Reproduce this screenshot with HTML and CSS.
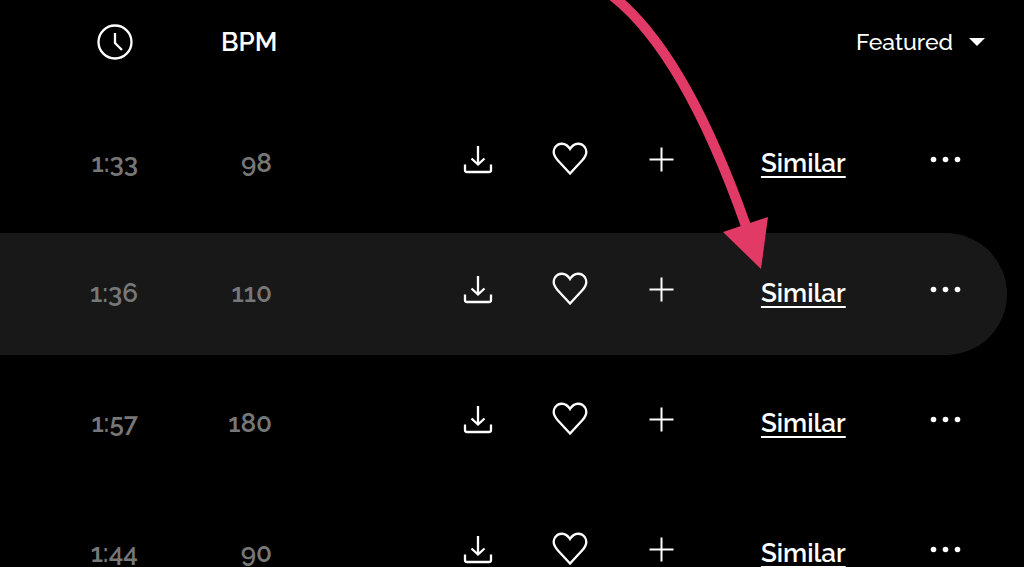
FILE: index.html
```html
<!DOCTYPE html>
<html lang="en">
<head>
<meta charset="utf-8">
<meta name="viewport" content="width=device-width, initial-scale=1">
<title>Tracks</title>
<link rel="stylesheet" href="styles.css">
</head>
<body>
<svg class="symbols" aria-hidden="true">
  <symbol id="download" viewBox="0 0 36 36"><path d="M18 4v18M11.500 16.500L18 22.500l6.500-6M5 22.500V28q0 2 2 2h22q2 0 2-2v-5.500" stroke-width="2.300"/></symbol>
  <symbol id="heart" viewBox="0 0 36 36"><path d="M18 31.500L5.500 18C1.500 13.500 0.500 9.500 3 5.500C6.500 0.500 13.500 0 18 7C22.500 0 29.500 0.500 33 5.500C35.500 9.500 34.500 13.500 30.500 18Z" stroke-width="2.300"/></symbol>
  <symbol id="plus" viewBox="0 0 36 36"><path d="M17.500 5.500v24M5.500 17.500h24" stroke-width="2"/></symbol>
  <symbol id="dots" viewBox="0 0 36 36"><g fill="currentColor" stroke="none"><circle cx="6.500" cy="17.500" r="2.800"/><circle cx="18.500" cy="17.500" r="2.800"/><circle cx="30.500" cy="17.500" r="2.800"/></g></symbol>
</svg>
<main class="page">
  <table class="tracks">
    <colgroup><col class="col-time"><col class="col-bpm"><col><col class="col-icon"><col class="col-icon"><col class="col-similar"><col class="col-more"></colgroup>
    <thead>
      <tr>
        <th class="time" scope="col" aria-label="Duration"><svg class="clock" viewBox="0 0 36 36"><circle cx="18" cy="18" r="16.500"/><path d="M18 9v10l7 7"/></svg></th>
        <th class="bpm bpm-title" scope="col">BPM</th>
        <td class="sorting" colspan="5">
          <span class="sort">
            <select class="sort-select" aria-label="Sort by"><option>Featured</option></select>
            <svg class="caret" viewBox="0 0 16 8" aria-hidden="true"><path d="M0 0h16l-8 8z"/></svg>
          </span>
        </td>
      </tr>
    </thead>
    <tbody>
      <tr>
        <td class="time">1:33</td><td class="bpm">98</td>
        <td class="action first"><button class="icon-button" aria-label="Download"><svg class="icon"><use href="#download"/></svg></button></td>
        <td class="action"><button class="icon-button" aria-label="Like"><svg class="icon"><use href="#heart"/></svg></button></td>
        <td class="action"><button class="icon-button" aria-label="Add"><svg class="icon"><use href="#plus"/></svg></button></td>
        <td class="similar"><a class="link" href="#">Similar</a></td>
        <td class="action more"><button class="icon-button" aria-label="More"><svg class="icon"><use href="#dots"/></svg></button></td>
      </tr>
      <tr class="active">
        <td class="time">1:36</td><td class="bpm">110</td>
        <td class="action first"><button class="icon-button" aria-label="Download"><svg class="icon"><use href="#download"/></svg></button></td>
        <td class="action"><button class="icon-button" aria-label="Like"><svg class="icon"><use href="#heart"/></svg></button></td>
        <td class="action"><button class="icon-button" aria-label="Add"><svg class="icon"><use href="#plus"/></svg></button></td>
        <td class="similar"><a class="link" href="#">Similar</a></td>
        <td class="action more"><button class="icon-button" aria-label="More"><svg class="icon"><use href="#dots"/></svg></button></td>
      </tr>
      <tr>
        <td class="time">1:57</td><td class="bpm">180</td>
        <td class="action first"><button class="icon-button" aria-label="Download"><svg class="icon"><use href="#download"/></svg></button></td>
        <td class="action"><button class="icon-button" aria-label="Like"><svg class="icon"><use href="#heart"/></svg></button></td>
        <td class="action"><button class="icon-button" aria-label="Add"><svg class="icon"><use href="#plus"/></svg></button></td>
        <td class="similar"><a class="link" href="#">Similar</a></td>
        <td class="action more"><button class="icon-button" aria-label="More"><svg class="icon"><use href="#dots"/></svg></button></td>
      </tr>
      <tr>
        <td class="time">1:44</td><td class="bpm">90</td>
        <td class="action first"><button class="icon-button" aria-label="Download"><svg class="icon"><use href="#download"/></svg></button></td>
        <td class="action"><button class="icon-button" aria-label="Like"><svg class="icon"><use href="#heart"/></svg></button></td>
        <td class="action"><button class="icon-button" aria-label="Add"><svg class="icon"><use href="#plus"/></svg></button></td>
        <td class="similar"><a class="link" href="#">Similar</a></td>
        <td class="action more"><button class="icon-button" aria-label="More"><svg class="icon"><use href="#dots"/></svg></button></td>
      </tr>
    </tbody>
  </table>
  <svg class="pointer" viewBox="0 0 180 270" aria-hidden="true">
    <path class="pointer-line" d="M10 -6C67 37 111 127 146 226"/>
    <path class="pointer-head" d="M123 232L168 217L161 269Z"/>
  </svg>
</main>
</body>
</html>
```
FILE: styles.css
```css
* { box-sizing: border-box; }

body {
  margin: 0;
  background: #000;
  color: #fff;
  font-family: Raleway, Lato, sans-serif;
  font-size: 26px;
  font-weight: 600;
  line-height: 32px;
}

.symbols { position: absolute; width: 0; height: 0; }

.page {
  position: relative;
  height: 100vh;
  overflow: hidden;
  padding-right: 17px;
}

.tracks {
  width: 100%;
  table-layout: fixed;
  border-collapse: separate;
  border-spacing: 0 8px;
}

.col-time { width: 138px; }
.col-bpm { width: 134px; }
.col-icon { width: 92px; }
.col-similar { width: 176px; }
.col-more { width: 123px; }

th, td { padding: 0; }
thead tr { height: 87px; }
thead th, thead td { padding-bottom: 20px; }
tbody tr { height: 122px; }

.time, .bpm { text-align: right; }

tbody .time, tbody .bpm {
  padding-bottom: 2px;
  color: #777;
}

thead .time { padding-right: 5px; }

thead .bpm-title {
  padding-left: 83px;
  font-weight: 600;
  text-align: left;
}

.clock {
  display: block;
  width: 36px;
  height: 36px;
  margin-left: auto;
  fill: none;
  stroke: #fff;
  stroke-width: 2.300;
}

.sorting { text-align: right; }

.sort {
  position: relative;
  display: inline-flex;
  align-items: center;
  margin-right: 22px;
}

.sort-select {
  appearance: none;
  padding: 0 32px 0 0;
  border: 0;
  background: transparent;
  color: #fff;
  font: inherit;
  font-size: 23px;
  font-weight: 500;
}

.caret {
  position: absolute;
  right: 0;
  width: 16px;
  height: 8px;
  fill: #fff;
  pointer-events: none;
}

.action { padding-bottom: 8px; text-align: center; }
.first { padding-right: 26px; text-align: right; }

.icon-button {
  display: inline-flex;
  padding: 2px;
  border: 0;
  background: none;
  color: #fff;
  vertical-align: middle;
}

.icon {
  width: 36px;
  height: 36px;
  fill: none;
  stroke: currentColor;
}

.similar { padding-left: 53px; padding-bottom: 2px; }

.link {
  color: #fff;
  text-decoration: underline;
  text-decoration-thickness: 2px;
  text-underline-offset: 4px;
  text-decoration-skip-ink: none;
}

.active td { background: #181818; }
.active .more { border-radius: 0 61px 61px 0; }

.pointer {
  position: absolute;
  top: 0;
  right: 244px;
  width: 180px;
  height: 270px;
  pointer-events: none;
}

.pointer-line { fill: none; stroke: #e23a66; stroke-width: 10; }
.pointer-head { fill: #e23a66; }
```
